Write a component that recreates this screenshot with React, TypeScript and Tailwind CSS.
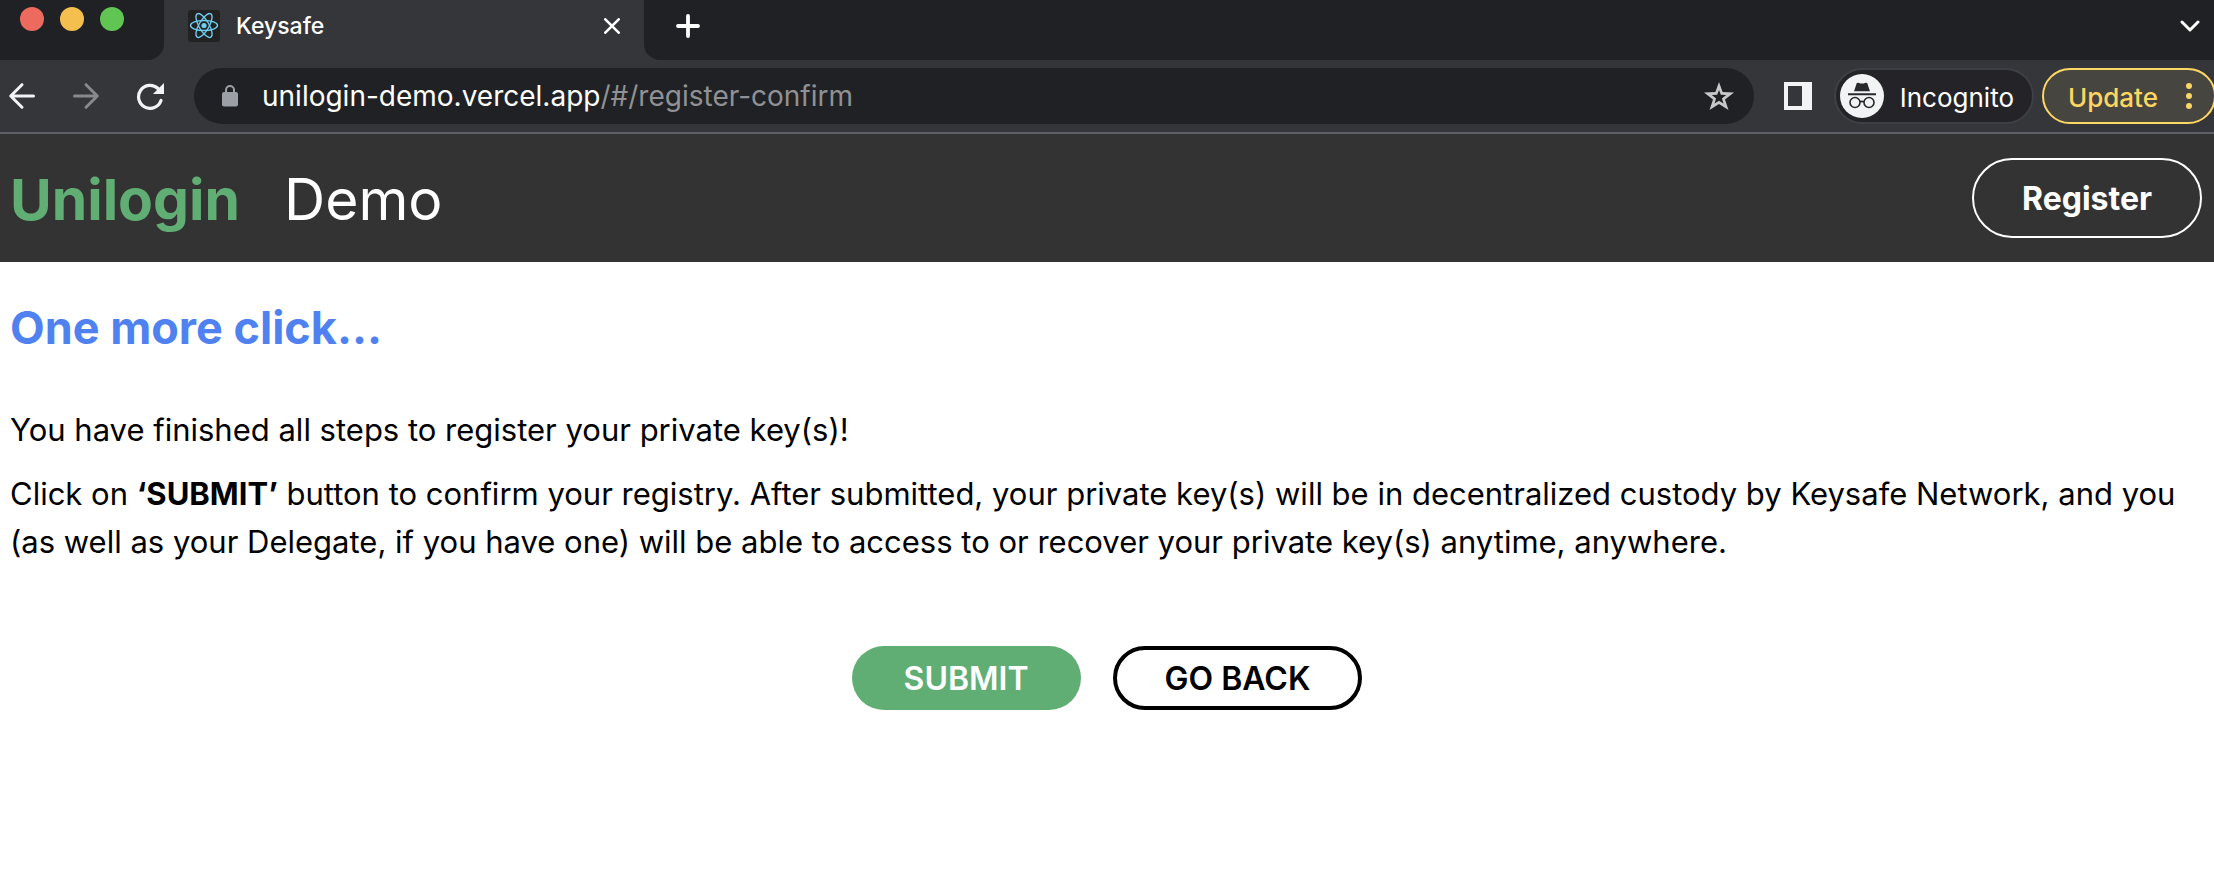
import React from "react";

function TrafficLights() {
  return (
    <div className="flex h-[60px] w-[164px] shrink-0 items-start gap-4 rounded-br-2xl bg-[#202124] pt-[7px] pl-5">
      <span className="size-6 rounded-full bg-[#ed6a5f]" />
      <span className="size-6 rounded-full bg-[#f5bf4f]" />
      <span className="size-6 rounded-full bg-[#61c554]" />
    </div>
  );
}

function ReactIcon() {
  return (
    <svg viewBox="0 0 32 32" className="size-8 shrink-0" aria-hidden="true">
      <rect width="32" height="32" rx="3" fill="#222222" />
      <g fill="none" stroke="#6fcdf0" strokeWidth="1.4">
        <ellipse cx="16" cy="15.5" rx="13.5" ry="5" />
        <ellipse cx="16" cy="15.5" rx="13.5" ry="5" transform="rotate(60 16 15.5)" />
        <ellipse cx="16" cy="15.5" rx="13.5" ry="5" transform="rotate(120 16 15.5)" />
      </g>
      <circle cx="16" cy="15.5" r="2.6" fill="#6fcdf0" />
    </svg>
  );
}

function TabStrip() {
  return (
    <div className="flex h-[60px] bg-[#35363a]">
      <TrafficLights />
      <div className="flex h-[52px] w-[480px] shrink-0 items-center pr-5 pl-6">
        <ReactIcon />
        <span className="ml-4 flex-1 text-[23px] font-medium text-white">Keysafe</span>
        <button aria-label="Close tab" className="flex size-6 items-center justify-center">
          <svg viewBox="0 0 16 16" className="size-4" fill="none" stroke="#fff" strokeWidth="2.6" strokeLinecap="round">
            <path d="M1.3 1.3 14.7 14.7M14.7 1.3 1.3 14.7" />
          </svg>
        </button>
      </div>
      <div className="flex flex-1 items-start justify-between rounded-bl-2xl bg-[#202124] pr-3 pl-8">
        <button aria-label="New tab" className="flex h-[52px] w-6 items-center">
          <svg viewBox="0 0 24 24" className="size-6" fill="none" stroke="#fff" strokeWidth="3.8" strokeLinecap="round">
            <path d="M12 2v20M2 12h20" />
          </svg>
        </button>
        <button aria-label="Search tabs" className="flex h-[52px] w-6 items-center justify-center">
          <svg viewBox="0 0 20 12" className="h-3 w-5" fill="none" stroke="#fff" strokeWidth="3" strokeLinecap="round" strokeLinejoin="round">
            <path d="M2 2l8 8 8-8" />
          </svg>
        </button>
      </div>
    </div>
  );
}

function Toolbar() {
  return (
    <div className="flex h-[74px] items-center overflow-hidden border-b-2 border-[#5f6065] bg-[#35363a] pl-2">
      <button aria-label="Back" className="size-7">
        <svg viewBox="0 0 28 28" className="size-7" fill="none" stroke="#f1f3f4" strokeWidth="3" strokeLinecap="round" strokeLinejoin="round">
          <path d="M25.5 14H3M14 2.7 2.7 14 14 25.3" />
        </svg>
      </button>
      <button aria-label="Forward" disabled className="ml-9 size-7">
        <svg viewBox="0 0 28 28" className="size-7" fill="none" stroke="#88898b" strokeWidth="3" strokeLinecap="round" strokeLinejoin="round">
          <path d="M2.5 14H25M14 2.7 25.3 14 14 25.3" />
        </svg>
      </button>
      <button aria-label="Reload" className="ml-9 size-7">
        <svg viewBox="0 0 28 28" className="size-7" fill="none">
          <path d="M22 6.5A11.5 11.5 0 1 0 25 18.5" stroke="#f1f3f4" strokeWidth="3.2" strokeLinecap="round" />
          <path d="M28 1v11H17z" fill="#f1f3f4" />
        </svg>
      </button>
      <div className="ml-[30px] flex h-14 flex-1 items-center rounded-full bg-[#202124] pr-5 pl-7">
        <svg viewBox="0 0 16 22" className="h-[22px] w-4 shrink-0" aria-hidden="true">
          <rect y="7" width="16" height="14.5" rx="2" fill="#9aa0a6" />
          <path d="M4 8V5a4 4 0 0 1 8 0v3" fill="none" stroke="#9aa0a6" strokeWidth="2" />
        </svg>
        <div className="ml-6 flex-1 text-[28px] text-white">
          unilogin-demo.vercel.app<span className="text-[#909194]">/#/register-confirm</span>
        </div>
        <button aria-label="Bookmark this page">
          <svg viewBox="0 0 30 28" className="h-7 w-[30px]">
            <path
              fill="#c7c8ca"
              fillRule="evenodd"
              d="M15 0l3.6 9.9 11.4.6-9 7 3.5 10.5-9.5-6-9.5 6L9 17.5l-9-7 11.4-.6zM15 8l-1.8 4.8-5.4.3 4.3 3.4-1.6 5.1 4.5-2.9 4.5 2.9-1.6-5.1 4.3-3.4-5.4-.3z"
            />
          </svg>
        </button>
      </div>
      <button aria-label="Side panel" className="ml-[30px] size-7">
        <svg viewBox="0 0 28 28" className="size-7">
          <path fill="#f1f3f4" fillRule="evenodd" d="M0 0h28v28H0zM4 4v20h14V4z" />
        </svg>
      </button>
      <button className="ml-[22px] flex h-14 items-center rounded-full border-2 border-[#3f4045] bg-[#242428] pr-[18px] pl-1 text-[26px] text-white">
        <svg viewBox="0 0 44 44" className="size-11" aria-hidden="true">
          <circle cx="22" cy="22" r="22" fill="#f1f3f4" />
          <path fill="#28292c" d="M16.8 9l1.8-.3q3.4 1.7 6.800 0l1.800.3 2.800 8.300H14zM8 19.300h28v1.900H8z" />
          <g fill="none" stroke="#28292c" strokeWidth="1.6">
            <circle cx="15" cy="28.5" r="5" />
            <circle cx="29" cy="28.5" r="5" />
            <path d="M20 28q2-1.3 4 0" />
          </g>
        </svg>
        <span className="ml-4 pt-0.5">Incognito</span>
      </button>
      <button className="-mr-0.5 ml-2 flex h-14 items-center rounded-full border-2 border-[#fdd663] bg-[#47453f] pr-[22px] pl-6 text-[26px] text-[#fdd663]">
        <span className="pt-0.5 font-medium">Update</span>
        <svg viewBox="0 0 6 28" className="ml-7 h-7 w-[6px]" fill="#fdd663" aria-hidden="true">
          <circle cx="3" cy="4" r="3" />
          <circle cx="3" cy="14" r="3" />
          <circle cx="3" cy="24" r="3" />
        </svg>
      </button>
    </div>
  );
}

export default function App() {
  return (
    <div className="bg-white font-['Inter',sans-serif] text-black">
      <TabStrip />
      <Toolbar />
      <header className="flex h-32 items-center justify-between bg-[#333333] pr-3 pl-2.5">
        <div className="flex items-center gap-11 pt-1 text-[57px]">
          <span className="font-bold text-[#60ae74]">Unilogin</span>
          <span className="text-white">Demo</span>
        </div>
        <button className="h-20 rounded-full border-2 border-white px-12 pt-0.5 text-[32px] font-bold text-white">Register</button>
      </header>
      <main className="px-2.5 pt-9">
        <h1 className="text-[45px] leading-[60px] font-bold text-[#4f82f0]">One more click...</h1>
        <p className="mt-12 text-[31px] leading-12">You have finished all steps to register your private key(s)!</p>
        <p className="mt-4 text-[31px] leading-12">
          Click on <strong>‘SUBMIT’</strong> button to confirm your registry. After submitted, your private key(s) will be in decentralized custody by Keysafe Network, and you (as well as your Delegate, if you have one) will be able to access to or recover your private key(s) anytime, anywhere.
        </p>
        <div className="mt-20 flex justify-center gap-8">
          <button className="h-16 rounded-full bg-[#60ae74] px-13 pt-0.5 text-[32px] font-semibold text-white">SUBMIT</button>
          <button className="h-16 rounded-full border-4 border-black px-12 pt-0.5 text-[32px] font-semibold">GO BACK</button>
        </div>
      </main>
    </div>
  );
}
